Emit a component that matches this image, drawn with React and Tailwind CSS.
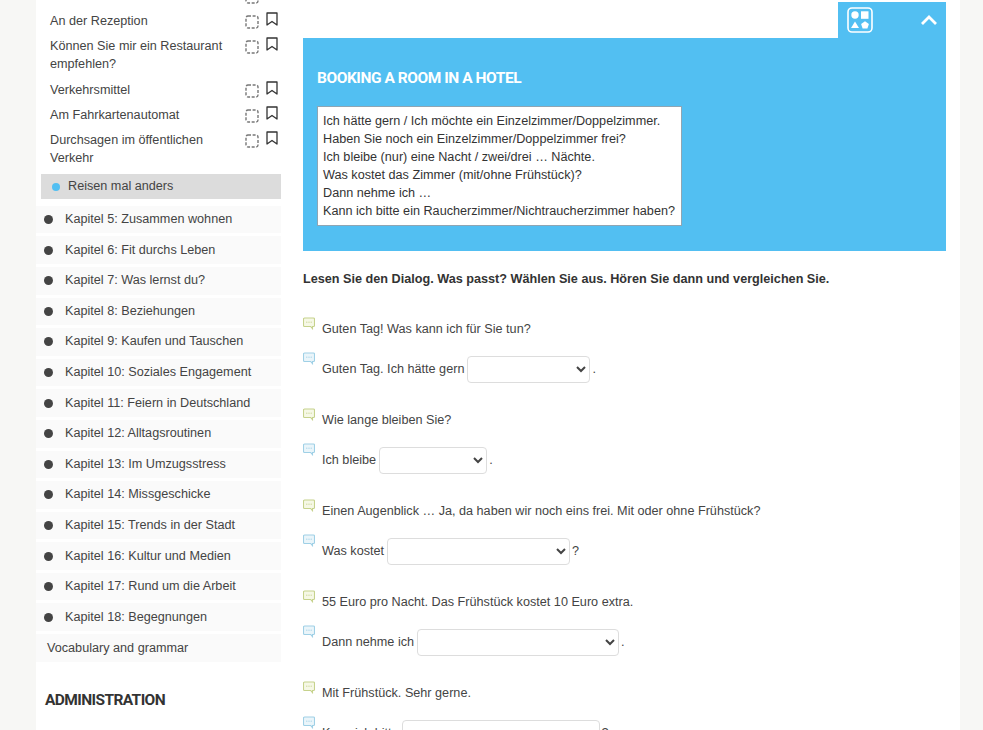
const subItems = [
  { label: ["An der Rezeption"] },
  { label: ["Können Sie mir ein Restaurant", "empfehlen?"] },
  { label: ["Verkehrsmittel"] },
  { label: ["Am Fahrkartenautomat"] },
  { label: ["Durchsagen im öffentlichen", "Verkehr"] },
];

const chapters = [
  "Kapitel 5: Zusammen wohnen",
  "Kapitel 6: Fit durchs Leben",
  "Kapitel 7: Was lernst du?",
  "Kapitel 8: Beziehungen",
  "Kapitel 9: Kaufen und Tauschen",
  "Kapitel 10: Soziales Engagement",
  "Kapitel 11: Feiern in Deutschland",
  "Kapitel 12: Alltagsroutinen",
  "Kapitel 13: Im Umzugsstress",
  "Kapitel 14: Missgeschicke",
  "Kapitel 15: Trends in der Stadt",
  "Kapitel 16: Kultur und Medien",
  "Kapitel 17: Rund um die Arbeit",
  "Kapitel 18: Begegnungen",
];

const phrases = [
  "Ich hätte gern / Ich möchte ein Einzelzimmer/Doppelzimmer.",
  "Haben Sie noch ein Einzelzimmer/Doppelzimmer frei?",
  "Ich bleibe (nur) eine Nacht / zwei/drei … Nächte.",
  "Was kostet das Zimmer (mit/ohne Frühstück)?",
  "Dann nehme ich …",
  "Kann ich bitte ein Raucherzimmer/Nichtraucherzimmer haben?",
];

const dialog = [
  { q: "Guten Tag! Was kann ich für Sie tun?", a: "Guten Tag. Ich hätte gern", w: "w-[123px]", end: "." },
  { q: "Wie lange bleiben Sie?", a: "Ich bleibe", w: "w-[108px]", end: "." },
  { q: "Einen Augenblick … Ja, da haben wir noch eins frei. Mit oder ohne Frühstück?", a: "Was kostet", w: "w-[183px]", end: "?" },
  { q: "55 Euro pro Nacht. Das Frühstück kostet 10 Euro extra.", a: "Dann nehme ich", w: "w-[202px]", end: "." },
  { q: "Mit Frühstück. Sehr gerne.", a: "Kann ich bitte", w: "w-[198px]", end: "?" },
];

function DashedBox({ className = "" }) {
  return (
    <svg width="14" height="14" viewBox="0 0 14 14" fill="none" className={className}>
      <rect x="1" y="1" width="12" height="12" rx="2" stroke="#777" strokeWidth="1.4" strokeDasharray="3 1.6" />
    </svg>
  );
}

function BookmarkIcon({ className = "" }) {
  return (
    <svg width="12" height="14" viewBox="0 0 12 14" fill="none" className={className}>
      <path d="M1 1h10v12L6 9.5 1 13z" stroke="#333" strokeWidth="1.3" strokeLinejoin="round" />
    </svg>
  );
}

function Bubble({ color, fill }) {
  return (
    <svg width="12" height="13" viewBox="0 0 12 13" fill="none" className="-mt-[1px] shrink-0">
      <path d="M1.5 1h9a1 1 0 0 1 1 1v6.5a1 1 0 0 1-1 1H9.5v2.2L7.6 9.5H1.5a1 1 0 0 1-1-1V2a1 1 0 0 1 1-1z" fill={fill} stroke={color} strokeWidth="1.1" />
      <circle cx="3.8" cy="5.2" r=".6" fill={color} />
      <circle cx="6" cy="5.2" r=".6" fill={color} />
      <circle cx="8.2" cy="5.2" r=".6" fill={color} />
    </svg>
  );
}

function ShapesIcon() {
  return (
    <svg width="26" height="26" viewBox="0 0 26 26" fill="none">
      <rect x="1" y="1" width="24" height="24" rx="4" stroke="white" strokeWidth="1.6" />
      <circle cx="8" cy="8" r="3.7" fill="white" />
      <rect x="14" y="4.3" width="7.5" height="7.5" fill="white" />
      <path d="M8 14.5l4 6.5H4z" fill="white" />
      <path d="M18 14.2l3.9 2.8-1.5 4.4h-4.8L14.1 17z" fill="white" />
    </svg>
  );
}

function Sidebar() {
  return (
    <aside className="w-[245px] shrink-0 font-['Liberation_Sans',sans-serif] text-[12.65px] text-[#444]">
      <div className="flex h-[12px] justify-end overflow-hidden pr-[22px]">
        <DashedBox className="-mt-[10px]" />
      </div>
      {subItems.map((item) => (
        <div key={item.label[0]} className="flex pb-[7.25px] pl-[14px] pr-[3px] leading-[18px]">
          <div className="w-[195px]">
            {item.label.map((line) => (
              <div key={line}>{line}</div>
            ))}
          </div>
          <DashedBox className="mt-[3px]" />
          <BookmarkIcon className="ml-[7px]" />
        </div>
      ))}
      <div className="ml-[5px] flex h-[25px] items-center bg-[#dcdcdc] pl-[11px]">
        <span className="h-2 w-2 rounded-full bg-[#52bff2]" />
        <span className="ml-[8px]">Reisen mal anders</span>
      </div>
      <div className="mt-[6.5px] flex flex-col gap-[3px]">
        {chapters.map((name) => (
          <div key={name} className="flex h-[27.6px] items-center bg-[#fafafa] pl-[8px]">
            <span className="h-[9px] w-[9px] rounded-full bg-[#444]" />
            <span className="ml-[12px]">{name}</span>
          </div>
        ))}
        <div className="flex h-[28px] items-center bg-[#fafafa] pl-[11px]">Vocabulary and grammar</div>
      </div>
      <h2 className="mt-[28px] pl-[9px] font-['Roboto',sans-serif] text-[15.5px] font-bold leading-[20px] tracking-[-0.6px] text-[#333]">
        ADMINISTRATION
      </h2>
    </aside>
  );
}

function Main() {
  return (
    <main className="ml-[22px] w-[643px] shrink-0 font-['Liberation_Sans',sans-serif] text-[12.65px] text-[#444]">
      <div className="mt-[2px] ml-auto flex h-[36px] w-[108px] items-center justify-between bg-[#52bff2] pl-[9px] pr-[8px]">
        <ShapesIcon />
        <svg width="18" height="11" viewBox="0 0 18 11" fill="none">
          <path d="M2 9l7-7 7 7" stroke="white" strokeWidth="2.8" />
        </svg>
      </div>
      <section className="h-[213px] bg-[#52bff2] pl-[14px] pt-[30px]">
        <h1 className="font-['Roboto',sans-serif] text-[15.5px] font-bold leading-[20px] tracking-[-0.45px] text-white">
          BOOKING A ROOM IN A HOTEL
        </h1>
        <div className="mt-[18px] w-[365px] border border-[#8fa5b3] bg-white px-[5px] py-[5px] leading-[18px] text-[#333]">
          {phrases.map((line) => (
            <div key={line}>{line}</div>
          ))}
        </div>
      </section>
      <p className="mt-[19px] font-bold leading-[18px] text-[#333]">
        Lesen Sie den Dialog. Was passt? Wählen Sie aus. Hören Sie dann und vergleichen Sie.
      </p>
      <div className="mt-[30px] flex flex-col gap-[26px]">
        {dialog.map((row) => (
          <div key={row.q}>
            <div className="flex">
              <Bubble color="#c6d28c" fill="#f6f8e6" />
              <span className="ml-[7px] mt-[2px] leading-[18px]">{row.q}</span>
            </div>
            <div className="mt-[15px] flex">
              <Bubble color="#9fd0e6" fill="#eaf5fa" />
              <div className="ml-[7px] mt-[3px] flex items-center">
                <span>{row.a}</span>
                <select className={`ml-[3px] mr-[2px] h-[27px] rounded-[4px] border border-[#ddd] bg-white ${row.w}`} />
                <span>{row.end}</span>
              </div>
            </div>
          </div>
        ))}
      </div>
    </main>
  );
}

export default function App() {
  return (
    <div className="h-[730px] overflow-hidden bg-[#f7f7f5]">
      <div className="ml-[36px] flex h-full w-[924px] bg-white">
        <Sidebar />
        <Main />
      </div>
    </div>
  );
}
